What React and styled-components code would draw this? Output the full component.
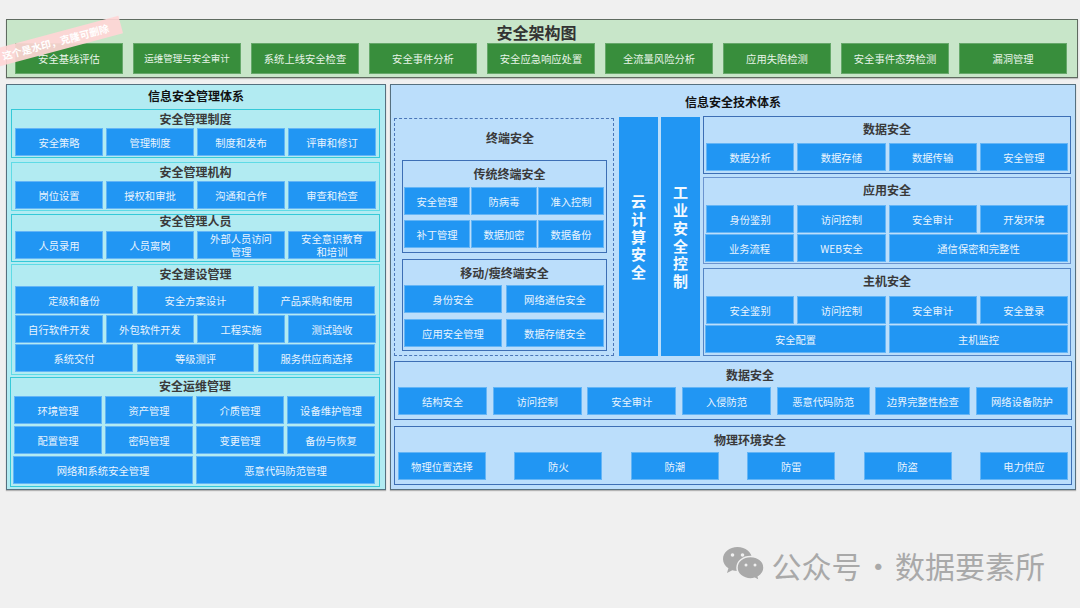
import React from "react";
import styled, { createGlobalStyle } from "styled-components";

const GlobalStyle = createGlobalStyle`
  * { box-sizing: border-box; }
  html, body { margin: 0; padding: 0; }
  body {
    background: #f0f0f0;
    font-family: "Noto Sans CJK SC", "Noto Sans", sans-serif;
  }
`;

const Page = styled.div`
  position: relative;
  width: 1080px;
  height: 608px;
  padding: 19px 0 0 6px;
  overflow: hidden;
`;

const Watermark = styled.div`
  position: absolute;
  left: -12px;
  top: 33px;
  width: 135px;
  height: 18px;
  transform: rotate(-15deg);
  background: rgba(255, 214, 214, 0.92);
  color: #fff;
  font-size: 10px;
  font-weight: 700;
  line-height: 18px;
  text-align: center;
  white-space: nowrap;
`;

const TopPanel = styled.section`
  width: 1072px;
  height: 59px;
  background: #c8e6c9;
  border: 1px solid #5f6b60;
  box-shadow: 0 1px 1px rgba(0, 0, 0, 0.2);
`;

const PageTitle = styled.h1`
  margin: 0;
  height: 23px;
  padding-right: 11px;
  font-size: 16px;
  font-weight: 700;
  line-height: 24px;
  text-align: center;
  color: #333;
`;

const GreenRow = styled.div`
  display: grid;
  grid-template-columns: repeat(9, 108px);
  justify-content: space-between;
  margin: 0 10px 0 8px;
`;

const GreenCell = styled.div`
  height: 31px;
  background: #388e3c;
  border: 1px solid #66a86a;
  color: #e8f5e9;
  font-size: ${(p) => (p.$small ? 9.5 : 10.3)}px;
  line-height: 29px;
  text-align: center;
  white-space: nowrap;
`;

const Columns = styled.div`
  display: flex;
  gap: 4px;
  margin-top: 6px;
`;

const Panel = styled.section`
  width: ${(p) => p.$w}px;
  height: 406px;
  background: ${(p) => p.$bg};
  border: 1px solid #56707f;
  box-shadow: 0 1px 1px rgba(0, 0, 0, 0.25);
`;

const PanelTitle = styled.h2`
  margin: 0;
  height: ${(p) => p.$h}px;
  padding-top: ${(p) => p.$pt || 0}px;
  font-size: 12px;
  font-weight: 700;
  line-height: ${(p) => p.$h - (p.$pt || 0)}px;
  text-align: center;
  color: #111;
`;

const Group = styled.div`
  width: ${(p) => p.$w}px;
  height: ${(p) => p.$h}px;
  margin-top: ${(p) => p.$mt}px;
  margin-left: ${(p) => p.$ml}px;
  padding: 0 ${(p) => p.$pr || 3}px 0 ${(p) => p.$pl || 3}px;
  border: 1px solid ${(p) => p.$line};
`;

const GroupTitle = styled.h3`
  margin: 0;
  height: ${(p) => p.$h}px;
  padding-left: ${(p) => p.$off || 0}px;
  font-size: 12px;
  font-weight: 700;
  line-height: ${(p) => p.$h}px;
  text-align: center;
  color: #3a3a3a;
`;

const Row = styled.div`
  display: grid;
  grid-template-columns: ${(p) => p.$cols};
  gap: ${(p) => p.$gap ?? 3}px;
  justify-content: ${(p) => p.$justify || "stretch"};
  margin-top: ${(p) => p.$mt || 0}px;
  margin-left: ${(p) => p.$ml || 0}px;
`;

const Cell = styled.div`
  display: flex;
  align-items: center;
  justify-content: center;
  height: 28px;
  padding: 0 8px;
  background: #2196f3;
  border: 1px solid #64b5f6;
  color: #e9f4fe;
  font-size: 10.3px;
  line-height: 13px;
  text-align: center;
`;

const TechMain = styled.div`
  display: flex;
  align-items: flex-start;
  height: 240px;
  margin-left: 3px;
`;

const Terminal = styled.div`
  width: 220px;
  height: 238px;
  margin-top: 2px;
  border: 1px dashed #4a76b8;
`;

const TerminalTitle = styled.h3`
  margin: 0;
  height: 38px;
  padding-left: 12px;
  font-size: 12px;
  font-weight: 700;
  line-height: 38px;
  text-align: center;
  color: #3a3a3a;
`;

const Tall = styled.div`
  display: flex;
  align-items: center;
  justify-content: center;
  width: 39px;
  height: 239px;
  margin-top: 1px;
  margin-left: ${(p) => p.$ml}px;
  background: #2196f3;
`;

const TallText = styled.span`
  width: 16px;
  color: #f2f9ff;
  font-size: 15px;
  font-weight: 700;
  line-height: 17.7px;
  text-align: center;
`;

const TechSide = styled.div`
  display: flex;
  flex-direction: column;
  margin-left: 3px;
`;

const Footer = styled.div`
  display: flex;
  align-items: center;
  justify-content: flex-end;
  gap: 8px;
  margin-top: 55px;
  padding-right: 35px;
  color: #a9a9a9;
  font-size: 30px;
  font-weight: 400;
  line-height: 40px;
  word-spacing: -5px;
  white-space: nowrap;
`;

const Cells = ({ items }) => items.map((t) => <Cell key={t}>{t}</Cell>);

const four = "repeat(4, 88px)";
const three = "118px 117px 117px";
const blueLine = "#3d6fb5";
const cyanLine = "#35c9d8";

const WeChat = () => (
  <svg width="41" height="36" viewBox="0 0 41 36" aria-hidden="true">
    <path d="M14.5 0C6.5 0 0 5.4 0 12c0 3.8 2.1 7.1 5.4 9.3L4 26l5.3-2.8c1.6.5 3.4.8 5.2.8 8 0 14.5-5.4 14.5-12S22.500 0 14.500 0z" fill="#a9a9a9" />
    <path d="M27.500 9.500c-7.600 0-13.500 5-13.500 11.200s5.900 11.200 13.500 11.200c1.500 0 2.900-.2 4.300-.6l4.700 2.700-1.200-4.200c3.500-2.100 5.700-5.400 5.700-9.100 0-6.200-5.900-11.200-13.500-11.200z" fill="#a9a9a9" stroke="#f0f0f0" strokeWidth="1.500" />
    <circle cx="9.500" cy="8" r="1.800" fill="#f0f0f0" />
    <circle cx="19.500" cy="8" r="1.800" fill="#f0f0f0" />
    <circle cx="23" cy="18" r="1.500" fill="#f0f0f0" />
    <circle cx="32" cy="18" r="1.500" fill="#f0f0f0" />
  </svg>
);

export default function App() {
  return (
    <Page>
      <GlobalStyle />
      <Watermark>这个是水印，克隆可删除</Watermark>

      <TopPanel>
        <PageTitle>安全架构图</PageTitle>
        <GreenRow>
          {["安全基线评估", "运维管理与安全审计", "系统上线安全检查", "安全事件分析", "安全应急响应处置", "全流量风险分析", "应用失陷检测", "安全事件态势检测", "漏洞管理"].map((t) => (
            <GreenCell key={t} $small={t.length > 8}>{t}</GreenCell>
          ))}
        </GreenRow>
      </TopPanel>

      <Columns>
        <Panel $w={380} $bg="#b2ebf2">
          <PanelTitle $h={22}>信息安全管理体系</PanelTitle>

          <Group $w={369} $h={49} $mt={2} $ml={4} $line={cyanLine}>
            <GroupTitle $h={18}>安全管理制度</GroupTitle>
            <Row $cols={four}><Cells items={["安全策略", "管理制度", "制度和发布", "评审和修订"]} /></Row>
          </Group>

          <Group $w={369} $h={49} $mt={4} $ml={4} $line="#5fdbe6">
            <GroupTitle $h={18}>安全管理机构</GroupTitle>
            <Row $cols={four}><Cells items={["岗位设置", "授权和审批", "沟通和合作", "审查和检查"]} /></Row>
          </Group>

          <Group $w={369} $h={48} $mt={3} $ml={4} $line={cyanLine}>
            <GroupTitle $h={12}>安全管理人员</GroupTitle>
            <Row $cols={four} $mt={4}><Cells items={["人员录用", "人员离岗", "外部人员访问管理", "安全意识教育和培训"]} /></Row>
          </Group>

          <Group $w={369} $h={111} $mt={2} $ml={4} $line="#5fdbe6">
            <GroupTitle $h={18}>安全建设管理</GroupTitle>
            <Row $cols={three} $gap={4} $mt={3}><Cells items={["定级和备份", "安全方案设计", "产品采购和使用"]} /></Row>
            <Row $cols={four} $mt={1}><Cells items={["自行软件开发", "外包软件开发", "工程实施", "测试验收"]} /></Row>
            <Row $cols={three} $gap={4} $mt={1}><Cells items={["系统交付", "等级测评", "服务供应商选择"]} /></Row>
          </Group>

          <Group $w={370} $h={110} $mt={2} $ml={3} $line={cyanLine}>
            <GroupTitle $h={16}>安全运维管理</GroupTitle>
            <Row $cols={four} $mt={2}><Cells items={["环境管理", "资产管理", "介质管理", "设备维护管理"]} /></Row>
            <Row $cols={four} $mt={2}><Cells items={["配置管理", "密码管理", "变更管理", "备份与恢复"]} /></Row>
            <Row $cols="180px 179px" $mt={2} $ml={-1}><Cells items={["网络和系统安全管理", "恶意代码防范管理"]} /></Row>
          </Group>
        </Panel>

        <Panel $w={686} $bg="#bbdefb">
          <PanelTitle $h={31} $pt={3}>信息安全技术体系</PanelTitle>

          <TechMain>
            <Terminal>
              <TerminalTitle>终端安全</TerminalTitle>
              <Group $w={205} $h={93} $mt={3} $ml={7} $pl={1} $pr={1} $line={blueLine}>
                <GroupTitle $h={26} $off={10}>传统终端安全</GroupTitle>
                <Row $cols="repeat(3, 66px)" $gap={1}><Cells items={["安全管理", "防病毒", "准入控制"]} /></Row>
                <Row $cols="repeat(3, 66px)" $gap={1} $mt={5}><Cells items={["补丁管理", "数据加密", "数据备份"]} /></Row>
              </Group>
              <Group $w={205} $h={92} $mt={6} $ml={7} $pl={1} $pr={1} $line={blueLine}>
                <GroupTitle $h={25}>移动/瘦终端安全</GroupTitle>
                <Row $cols="repeat(2, 98px)" $gap={4}><Cells items={["身份安全", "网络通信安全"]} /></Row>
                <Row $cols="repeat(2, 98px)" $gap={4} $mt={6}><Cells items={["应用安全管理", "数据存储安全"]} /></Row>
              </Group>
            </Terminal>

            <Tall $ml={5}><TallText>云计算安全</TallText></Tall>
            <Tall $ml={3}><TallText>工业安全控制</TallText></Tall>

            <TechSide>
              <Group $w={368} $h={58} $mt={0} $ml={0} $pl={2} $pr={2} $line={blueLine}>
                <GroupTitle $h={24}>数据安全</GroupTitle>
                <Row $cols="repeat(4, 1fr)" $mt={2}><Cells items={["数据分析", "数据存储", "数据传输", "安全管理"]} /></Row>
              </Group>
              <Group $w={368} $h={87} $mt={3} $ml={0} $pl={2} $pr={2} $line="#6b94cf">
                <GroupTitle $h={24}>应用安全</GroupTitle>
                <Row $cols="repeat(4, 1fr)" $mt={3}><Cells items={["身份鉴别", "访问控制", "安全审计", "开发环境"]} /></Row>
                <Row $cols="89px 89px 179px" $mt={1} $ml={-1}><Cells items={["业务流程", "WEB安全", "通信保密和完整性"]} /></Row>
              </Group>
              <Group $w={368} $h={88} $mt={4} $ml={0} $pl={2} $pr={2} $line="#5585c4">
                <GroupTitle $h={24}>主机安全</GroupTitle>
                <Row $cols="repeat(4, 1fr)" $mt={3}><Cells items={["安全鉴别", "访问控制", "安全审计", "安全登录"]} /></Row>
                <Row $cols="181px 179px" $mt={1} $ml={-1}><Cells items={["安全配置", "主机监控"]} /></Row>
              </Group>
            </TechSide>
          </TechMain>

          <Group $w={678} $h={59} $mt={5} $ml={3} $line={blueLine}>
            <GroupTitle $h={25} $off={34}>数据安全</GroupTitle>
            <Row $cols="89px 89px 89px 89px 93px 95px 92px" $gap={5} $justify="space-between"><Cells items={["结构安全", "访问控制", "安全审计", "入侵防范", "恶意代码防范", "边界完整性检查", "网络设备防护"]} /></Row>
          </Group>

          <Group $w={678} $h={59} $mt={6} $ml={3} $line={blueLine}>
            <GroupTitle $h={25} $off={34}>物理环境安全</GroupTitle>
            <Row $cols="repeat(6, 88px)" $gap={0} $justify="space-between"><Cells items={["物理位置选择", "防火", "防潮", "防雷", "防盗", "电力供应"]} /></Row>
          </Group>
        </Panel>
      </Columns>

      <Footer>
        <WeChat />
        <span>公众号 · 数据要素所</span>
      </Footer>
    </Page>
  );
}
